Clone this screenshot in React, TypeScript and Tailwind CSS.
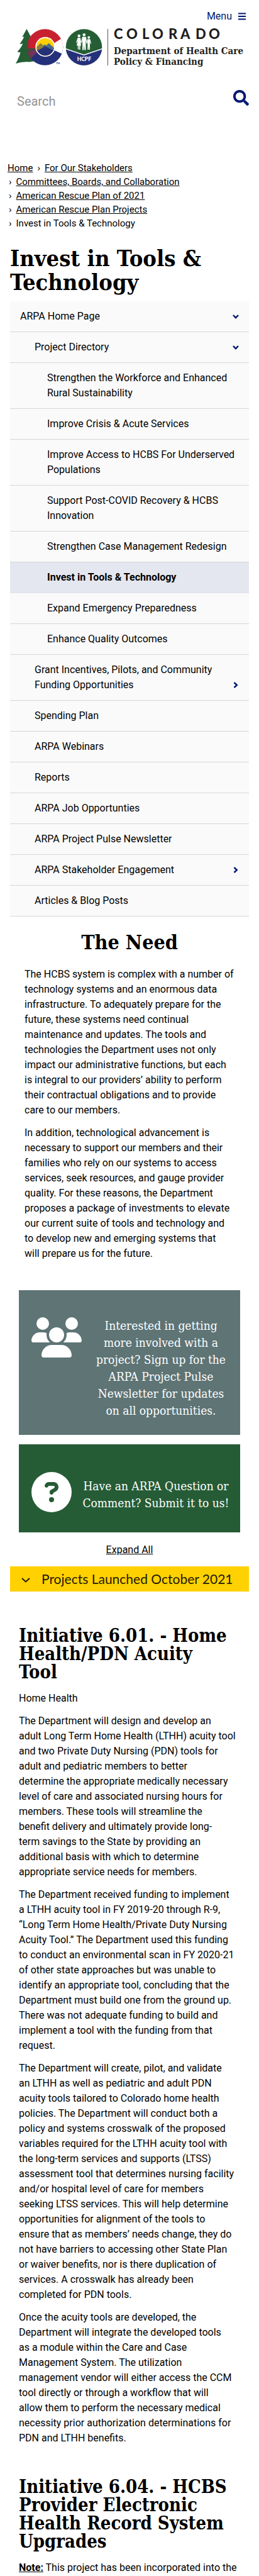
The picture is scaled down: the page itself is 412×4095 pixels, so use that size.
import React from "react";
import { FaUsers, FaCircleQuestion } from "react-icons/fa6";
import { FaSearch } from "react-icons/fa";

const serif = "font-['DejaVu_Serif_Condensed','DejaVu_Serif',serif]";

function LogoMarks() {
  return (
    <svg viewBox="25 45 138 60" className="mt-[5px] h-[60px] w-[138px] shrink-0" role="img" aria-label="Colorado Department of Health Care Policy and Financing">
      <defs>
        <clipPath id="cShape">
          <circle cx="71.5" cy="75" r="28.8" />
        </clipPath>
        <clipPath id="disc">
          <circle cx="72" cy="74.5" r="14" />
        </clipPath>
        <clipPath id="seal">
          <circle cx="133.5" cy="75" r="28.8" />
        </clipPath>
      </defs>
      <path
        d="M42.5 46 L35.5 58.5 Q37.5 59 38.5 58.2 Q35.5 65 31.5 69.5 Q34 70.5 36.5 69 Q33 77 27.8 82 Q29.5 84 32.5 82.8 Q31 91 25 101 Q36 97.5 47 98.5 L62 96 L56 66 L49 58.5 Z"
        fill="#255e34"
      />
      <g clipPath="url(#cShape)">
        <rect x="42" y="45" width="60" height="32" fill="#c9202f" />
        <path d="M42 97 L58 82 L72 71 L102 71 L102 105 L42 105 Z" fill="#25307b" />
        <path d="M42 84 L57 77 L60 82 L46 96 L42 94 Z" fill="#72345b" />
        <path d="M42 61 L46.5 59 L50 91 L42 97 Z" fill="#7c2c42" opacity="0.45" />
        <path d="M84 70 L102 58.5 L102 87 L84 79 Z" fill="#fff" />
      </g>
      <circle cx="72" cy="74.5" r="15.7" fill="#fff" />
      <g clipPath="url(#disc)">
        <rect x="57" y="60" width="30" height="30" fill="#ffd100" />
        <path d="M56 77 L64.5 68.5 L72 75 L66 84 L56 84 Z" fill="#8b7f3a" />
        <path d="M68 73 L71.5 70.5 L73.5 72.5 L77.5 68.5 L88 78 L88 82 L72 80 Z" fill="#4b6b8b" />
        <path d="M56 80 L61.5 79.5 L72 73.5 L82.5 79 L88 80 L88 90 L56 90 Z" fill="#25307b" />
      </g>
      <text x="89" y="102" fontSize="4" fontWeight="700" fill="#25307b" fontFamily="Lato, sans-serif">TM</text>
      <g clipPath="url(#seal)">
        <rect x="104" y="45" width="60" height="60" fill="#255e34" />
        <path d="M104 77.5 L133.5 87.5 L163 77.5 L163 105 L104 105 Z" fill="#25307b" />
        <path d="M104 77.5 L133.5 87.5 L163 77.5" fill="none" stroke="#fff" strokeWidth="1.6" />
      </g>
      <g fill="#fff">
        <circle cx="125.7" cy="57" r="2.2" />
        <path d="M123.6 60 H127.8 L129.4 68 L128.6 68.6 L127.4 64.5 L129.2 72.5 H127.6 V79 H126.1 V72.5 H125.3 V78.5 H123.8 V72.5 H122 L124 64.5 L121.8 68.6 L121 68 Z" />
        <circle cx="133.8" cy="55.3" r="2.3" />
        <path d="M130.9 58.6 H136.7 L138.6 68 L137.6 68.6 L136.4 64 L136.6 79.5 H134.4 L133.8 71 L133.2 79.5 H131 L131.2 64 L130 68.6 L129 68 Z" />
        <circle cx="141.2" cy="59.5" r="2" />
        <path d="M139 62.2 H143.4 L145.2 69.5 L144.3 70 L142.9 66 L143.1 79 H141.6 L141.2 73 L140.8 79 H139.3 L139.5 66 L138.4 70 L137.6 69.5 Z" />
      </g>
      <text x="133.8" y="97.2" textAnchor="middle" fontSize="8.5" fontWeight="900" fill="#fff" fontFamily="Lato, sans-serif">HCPF</text>
    </svg>
  );
}

function Chevron({ right = false }: { right?: boolean }) {
  return (
    <svg viewBox="0 0 10 10" className="size-[10px]" fill="none" stroke="currentColor" strokeWidth="2.4" aria-hidden="true">
      {right ? <path d="M2.5 1 L6.8 5 L2.5 9" /> : <path d="M1 3 L5 7.2 L9 3" />}
    </svg>
  );
}

function Lines({ text }: { text: string[] }) {
  return (
    <>
      {text.map((line, i) => (
        <React.Fragment key={line}>
          {i > 0 && <br />}
          {line}
        </React.Fragment>
      ))}
    </>
  );
}

type Item = { label: string; level: 0 | 1 | 2; open?: boolean; current?: boolean };

const items: Item[] = [
  { label: "ARPA Home Page", level: 0, open: true },
  { label: "Project Directory", level: 1, open: true },
  { label: "Strengthen the Workforce and Enhanced Rural Sustainability", level: 2 },
  { label: "Improve Crisis & Acute Services", level: 2 },
  { label: "Improve Access to HCBS For Underserved Populations", level: 2 },
  { label: "Support Post-COVID Recovery & HCBS Innovation", level: 2 },
  { label: "Strengthen Case Management Redesign", level: 2 },
  { label: "Invest in Tools & Technology", level: 2, current: true },
  { label: "Expand Emergency Preparedness", level: 2 },
  { label: "Enhance Quality Outcomes", level: 2 },
  { label: "Grant Incentives, Pilots, and Community Funding Opportunities", level: 1, open: false },
  { label: "Spending Plan", level: 1 },
  { label: "ARPA Webinars", level: 1 },
  { label: "Reports", level: 1 },
  { label: "ARPA Job Opportunties", level: 1 },
  { label: "ARPA Project Pulse Newsletter", level: 1 },
  { label: "ARPA Stakeholder Engagement", level: 1, open: false },
  { label: "Articles & Blog Posts", level: 1 },
];

const indents = ["pl-4", "pl-[39px]", "pl-[59px]"];

function NavItem({ item }: { item: Item }) {
  const expandable = item.open !== undefined;
  return (
    <li
      className={`flex items-end border-b py-3 pr-4 ${indents[item.level]} ${
        item.current ? "border-[#dfe2ee] bg-[#e4e7ef] font-bold" : "border-[#d6d6d6] bg-[#fafafa]"
      }`}
    >
      <a href="#" className="flex-1" aria-current={item.current ? "page" : undefined}>
        {item.label}
      </a>
      {expandable && (
        <button type="button" aria-label={`Toggle ${item.label}`} aria-expanded={item.open} className="flex h-6 items-center text-[#001970]">
          <Chevron right={!item.open} />
        </button>
      )}
    </li>
  );
}

const crumbs = ["Committees, Boards, and Collaboration", "American Rescue Plan of 2021", "American Rescue Plan Projects"];

const need = [
  [
    "The HCBS system is complex with a number of",
    "technology systems and an enormous data",
    "infrastructure. To adequately prepare for the",
    "future, these systems need continual",
    "maintenance and updates. The tools and",
    "technologies the Department uses not only",
    "impact our administrative functions, but each",
    "is integral to our providers’ ability to perform",
    "their contractual obligations and to provide",
    "care to our members.",
  ],
  [
    "In addition, technological advancement is",
    "necessary to support our members and their",
    "families who rely on our systems to access",
    "services, seek resources, and gauge provider",
    "quality. For these reasons, the Department",
    "proposes a package of investments to elevate",
    "our current suite of tools and technology and",
    "to develop new and emerging systems that",
    "will prepare us for the future.",
  ],
];

const acuityTool = [
  ["Home Health"],
  [
    "The Department will design and develop an",
    "adult Long Term Home Health (LTHH) acuity tool",
    "and two Private Duty Nursing (PDN) tools for",
    "adult and pediatric members to better",
    "determine the appropriate medically necessary",
    "level of care and associated nursing hours for",
    "members. These tools will streamline the",
    "benefit delivery and ultimately provide long-",
    "term savings to the State by providing an",
    "additional basis with which to determine",
    "appropriate service needs for members.",
  ],
  [
    "The Department received funding to implement",
    "a LTHH acuity tool in FY 2019-20 through R-9,",
    "“Long Term Home Health/Private Duty Nursing",
    "Acuity Tool.” The Department used this funding",
    "to conduct an environmental scan in FY 2020-21",
    "of other state approaches but was unable to",
    "identify an appropriate tool, concluding that the",
    "Department must build one from the ground up.",
    "There was not adequate funding to build and",
    "implement a tool with the funding from that",
    "request.",
  ],
  [
    "The Department will create, pilot, and validate",
    "an LTHH as well as pediatric and adult PDN",
    "acuity tools tailored to Colorado home health",
    "policies. The Department will conduct both a",
    "policy and systems crosswalk of the proposed",
    "variables required for the LTHH acuity tool with",
    "the long-term services and supports (LTSS)",
    "assessment tool that determines nursing facility",
    "and/or hospital level of care for members",
    "seeking LTSS services. This will help determine",
    "opportunities for alignment of the tools to",
    "ensure that as members’ needs change, they do",
    "not have barriers to accessing other State Plan",
    "or waiver benefits, nor is there duplication of",
    "services. A crosswalk has already been",
    "completed for PDN tools.",
  ],
  [
    "Once the acuity tools are developed, the",
    "Department will integrate the developed tools",
    "as a module within the Care and Case",
    "Management System. The utilization",
    "management vendor will either access the CCM",
    "tool directly or through a workflow that will",
    "allow them to perform the necessary medical",
    "necessity prior authorization determinations for",
    "PDN and LTHH benefits.",
  ],
];

export default function App() {
  return (
    <div className="bg-white font-[Roboto,sans-serif] text-base leading-6 text-black">
      <header className="px-4">
        <div className="flex justify-end pt-[14px] pr-[5px]">
          <button type="button" className="flex h-6 items-center gap-[10px] text-base text-[#001970]">
            Menu
            <svg viewBox="0 0 12 12" className="size-3" fill="#001970" aria-hidden="true">
              <rect y="0.5" width="12" height="2" />
              <rect y="5" width="12" height="2" />
              <rect y="9.5" width="12" height="2" />
            </svg>
          </button>
        </div>
        <a href="#" className="mt-[2px] flex pl-[9px]">
          <LogoMarks />
          <span className="mt-[6px] ml-2 h-[58px] w-px shrink-0 bg-[#6b4a50]" />
          <span className="ml-[9px] flex flex-col text-[#231f20]">
            <svg viewBox="0 0 180 33" className="h-[33px] w-[180px]" aria-label="Colorado">
              <text x="0 20 45 61 87 106 130 151" y="22" fontSize="22" fontWeight="900" fill="#231f20" fontFamily="Lato, sans-serif">COLORADO</text>
            </svg>
            <span className={`text-[15px] leading-[17px] font-bold ${serif}`}>
              Department of Health Care
              <br />
              Policy &amp; Financing
            </span>
          </span>
        </a>
        <form className="mt-9 flex items-start justify-between pl-[11px]">
          <input type="search" aria-label="Search" placeholder="Search" className="h-9 min-w-0 flex-1 text-xl placeholder:text-[#949494] focus:outline-none" />
          <button type="submit" aria-label="Search" className="text-[#001970]">
            <FaSearch className="size-[25px]" />
          </button>
        </form>
      </header>

      <nav aria-label="Breadcrumb" className="mt-[77px] px-3 text-[15px] leading-[22px]">
        <ol>
          <li className="flex gap-[7px]">
            <a href="#" className="underline">Home</a>
            <span>›</span>
            <a href="#" className="underline">For Our Stakeholders</a>
          </li>
          {crumbs.map((c) => (
            <li key={c} className="flex gap-[7px] pl-[2px]">
              <span>›</span>
              <a href="#" className="underline">{c}</a>
            </li>
          ))}
          <li className="flex gap-[7px] pl-[2px]">
            <span>›</span>
            <span>Invest in Tools &amp; Technology</span>
          </li>
        </ol>
      </nav>

      <main className="px-4">
        <h1 className={`mt-[25px] text-[36px] leading-[38px] font-bold ${serif}`}>Invest in Tools &amp; Technology</h1>

        <ul className="mt-3">
          {items.map((item) => (
            <NavItem key={item.label} item={item} />
          ))}
        </ul>

        <section className="flex flex-col gap-3 pr-[14px] pl-[23px]">
          <h2 className={`mt-[22px] mb-2 pr-[9px] text-center text-[32px] leading-[38px] font-bold ${serif}`}>The Need</h2>
          {need.map((p) => (
            <p key={p[0]}>
              <Lines text={p} />
            </p>
          ))}
        </section>

        <div className={`mt-[46px] flex flex-col gap-[15px] px-[14px] text-[19px] leading-[27px] text-white ${serif}`}>
          <a href="#" className="flex items-start bg-[#5e7475] pt-[43px] pr-4 pb-[25px] pl-5">
            <FaUsers className="h-16 w-20 shrink-0" />
            <span className="flex-1 pl-4 text-center">
              <Lines
                text={[
                  "Interested in getting",
                  "more involved with a",
                  "project? Sign up for the",
                  "ARPA Project Pulse",
                  "Newsletter for updates",
                  "on all opportunities.",
                ]}
              />
            </span>
          </a>
          <a href="#" className="flex items-start bg-[#255c36] pt-11 pr-3 pb-8 pl-5">
            <FaCircleQuestion className="h-16 w-16 shrink-0" />
            <span className="flex-1 pt-[9px] pl-3 text-center">Have an ARPA Question or Comment? Submit it to us!</span>
          </a>
        </div>

        <div className="mt-4 flex justify-center">
          <button type="button" className="underline">Expand All</button>
        </div>

        <button
          type="button"
          className="mt-[14px] flex h-10 w-full items-center gap-[18px] bg-[#ffd100] pl-[18px] font-[Lato,sans-serif] text-[21px] leading-8 text-[#241a00]"
        >
          <svg viewBox="0 0 14 14" className="size-[14px]" fill="none" stroke="currentColor" strokeWidth="2" aria-hidden="true">
            <path d="M1 6 L7 11.5 L13 6" />
          </svg>
          Projects Launched October 2021
        </button>

        <section className="flex flex-col gap-3 px-[14px]">
          <h3 className={`mt-[56px] mb-[3px] text-[29px] leading-[29px] font-bold ${serif}`}>
            <Lines text={["Initiative 6.01. - Home", "Health/PDN Acuity", "Tool"]} />
          </h3>
          {acuityTool.map((p) => (
            <p key={p[0]}>
              <Lines text={p} />
            </p>
          ))}
        </section>

        <section className="flex flex-col gap-3 px-[14px]">
          <h3 className={`mt-[51px] mb-[3px] text-[29px] leading-[29px] font-bold ${serif}`}>
            Initiative 6.04. - HCBS Provider Electronic Health Record System Upgrades
          </h3>
          <p>
            <strong className="underline">Note:</strong> This project has been incorporated into the
          </p>
        </section>
      </main>
    </div>
  );
}
